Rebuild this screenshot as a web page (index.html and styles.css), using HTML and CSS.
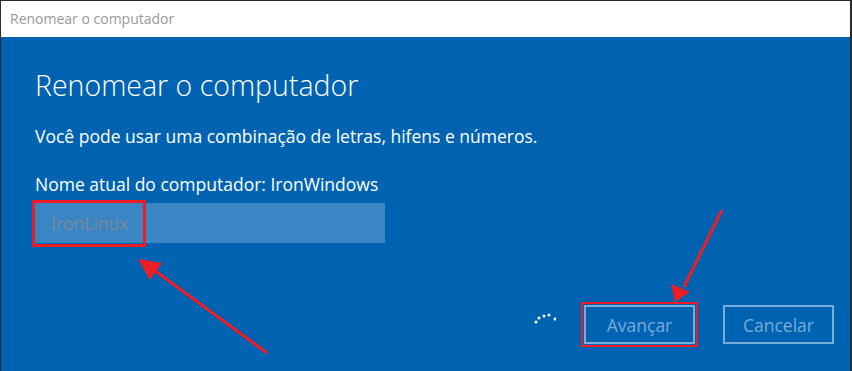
FILE: index.html
```html
<!DOCTYPE html>
<html lang="pt-BR">
	<head>
		<meta charset="UTF-8" />
		<meta name="viewport" content="width=device-width, initial-scale=1.0" />
		<title>Renomear o computador</title>
		<link rel="stylesheet" href="styles.css">
	</head>
	<body>
		<div class="window">
			<div class="titlebar">Renomear o computador</div>

			<div class="content">
				<h1>Renomear o computador</h1>
				<p class="hint">Você pode usar uma combinação de letras, hifens e números.</p>
				<label class="current" for="nameInput">Nome atual do computador: IronWindows</label>
				<input type="text" id="nameInput" class="name-input" value="IronLinux" />

				<div class="actions">
					<svg class="spinner" width="22" height="12" viewBox="0 0 22 12">
						<circle cx="2" cy="9" r="1.5" />
						<circle cx="5" cy="5" r="1.5" />
						<circle cx="10" cy="3" r="1.5" />
						<circle cx="15" cy="2" r="1.5" />
						<circle cx="21" cy="6" r="1.5" />
					</svg>
					<button class="btn marked">Avançar</button>
					<button class="btn">Cancelar</button>
				</div>
			</div>

			<!-- marcações vermelhas do print -->
			<svg class="marks" width="852" height="371" viewBox="0 0 852 371">
				<rect x="33.5" y="201.5" width="111" height="44" />
				<line x1="267" y1="353" x2="150" y2="267" />
				<polygon points="138,259 162,263 150,280" />
				<line x1="722" y1="210" x2="684" y2="287" />
				<polygon points="675,302 671,284 690,292" />
			</svg>
		</div>
	</body>
</html>
```

FILE: styles.css
```css
:root {
	--blue: #0063b1;
	--field: #3a86c4;
	--muted: #78acd9;
	--mark: #ee1c25;
	--frame: #2b2b2b;
}

* {
	box-sizing: border-box;
}

body {
	margin: 0;
	font-family: 'Open Sans', 'Noto Sans', sans-serif;
	background: var(--blue);
}

.window {
	position: relative;
	width: 852px;
	height: 371px;
	display: flex;
	flex-direction: column;
	border-top: 1px solid var(--frame);
	border-left: 1px solid var(--frame);
	border-right: 2px solid var(--frame);
	overflow: hidden;
}

.titlebar {
	height: 36px;
	flex-shrink: 0;
	background: #fff;
	color: #999;
	font-size: 14px;
	padding: 8px 0 0 9px;
}

.content {
	flex: 1;
	background: var(--blue);
	color: #fff;
	padding: 28px 0 0 34px;
}

h1 {
	margin: 0;
	font-weight: 300;
	font-size: 28.5px;
	line-height: 40px;
}

.hint {
	margin: 19px 0 0;
	font-size: 17.5px;
	line-height: 24px;
}

.current {
	display: block;
	margin-top: 24px;
	font-size: 17.5px;
	line-height: 24px;
}

.name-input {
	display: block;
	width: 351px;
	height: 40px;
	margin: 7px 0 0 -1px;
	padding: 0 17px;
	border: none;
	background: var(--field);
	color: #7c8a98;
	font-family: inherit;
	font-size: 17.5px;
	outline: none;
}

.actions {
	display: flex;
	align-items: flex-start;
	justify-content: flex-end;
	gap: 28px;
	margin: 62px 16px 0 0;
}

.spinner {
	fill: #fff;
	margin-top: 8px;
}

.btn {
	width: 111px;
	height: 39px;
	background: transparent;
	border: 2px solid var(--muted);
	color: var(--muted);
	font-family: inherit;
	font-size: 17.5px;
	cursor: pointer;
}

.marked {
	outline: 2px solid var(--mark);
	outline-offset: 1px;
}

.marks {
	position: absolute;
	left: -1px;
	top: -1px;
	pointer-events: none;
}

.marks rect,
.marks line {
	fill: none;
	stroke: var(--mark);
	stroke-width: 3;
}

.marks polygon {
	fill: var(--mark);
}
```
